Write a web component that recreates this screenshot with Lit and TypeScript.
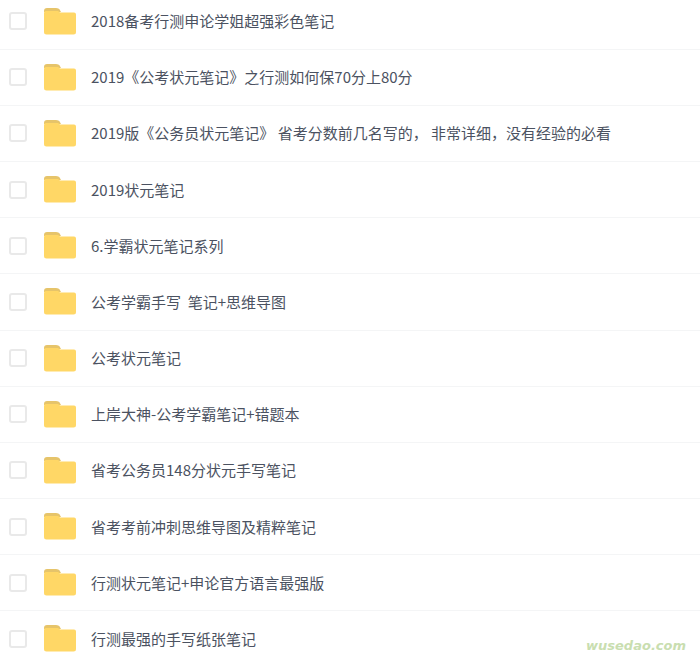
import { LitElement, html, css, svg } from "lit";
import { customElement } from "lit/decorators.js";

const names = [
  "2018备考行测申论学姐超强彩色笔记",
  "2019《公考状元笔记》之行测如何保70分上80分",
  "2019版《公务员状元笔记》 省考分数前几名写的， 非常详细，没有经验的必看",
  "2019状元笔记",
  "6.学霸状元笔记系列",
  "公考学霸手写  笔记+思维导图",
  "公考状元笔记",
  "上岸大神-公考学霸笔记+错题本",
  "省考公务员148分状元手写笔记",
  "省考考前冲刺思维导图及精粹笔记",
  "行测状元笔记+申论官方语言最强版",
  "行测最强的手写纸张笔记",
];

const folder = svg`<svg class="folder" width="32" height="27" viewBox="0 0 32 27">
  <path d="M0 3a3 3 0 0 1 3-3h9c2 0 3 .8 3.600 1.600L17 4H0z" fill="#e6c46a"/>
  <path d="M0 5a2 2 0 0 1 2-2h12l2 1.500h14a2 2 0 0 1 2 2V24a2.500 2.500 0 0 1-2.500 2.500H2.500A2.500 2.500 0 0 1 0 24z" fill="#ffd766"/>
</svg>`;

@customElement("app-root")
export class AppRoot extends LitElement {
  static styles = css`
    :host {
      display: block;
      position: relative;
      height: 664px;
      overflow: hidden;
      background: #fff;
      font-family: "Noto Sans CJK SC", sans-serif;
    }
    .list {
      margin-top: -6.5px;
    }
    .row {
      box-sizing: border-box;
      height: 56.18px;
      display: flex;
      align-items: center;
      padding-left: 9px;
      border-bottom: 1px solid #f4f5f6;
    }
    .check {
      box-sizing: border-box;
      width: 18px;
      height: 18px;
      border: 2px solid #e9e9e9;
      border-radius: 3px;
      margin-right: 17px;
      flex: none;
    }
    .folder {
      flex: none;
      margin-right: 15px;
    }
    .name {
      font-size: 15px;
      line-height: 20px;
      color: #4b5261;
      white-space: pre;
    }
    .mark {
      position: absolute;
      right: 14px;
      bottom: 9px;
      font-family: "DejaVu Sans", sans-serif;
      font-style: italic;
      font-weight: bold;
      font-size: 13px;
      letter-spacing: 0;
      line-height: 18px;
      color: #c9deb0;
    }
  `;

  render() {
    return html`
      <div class="list">
        ${names.map(
          (n) => html`<div class="row">
            <span class="check"></span>
            ${folder}
            <span class="name">${n}</span>
          </div>`
        )}
      </div>
      <div class="mark">wusedao.com</div>
    `;
  }
}
